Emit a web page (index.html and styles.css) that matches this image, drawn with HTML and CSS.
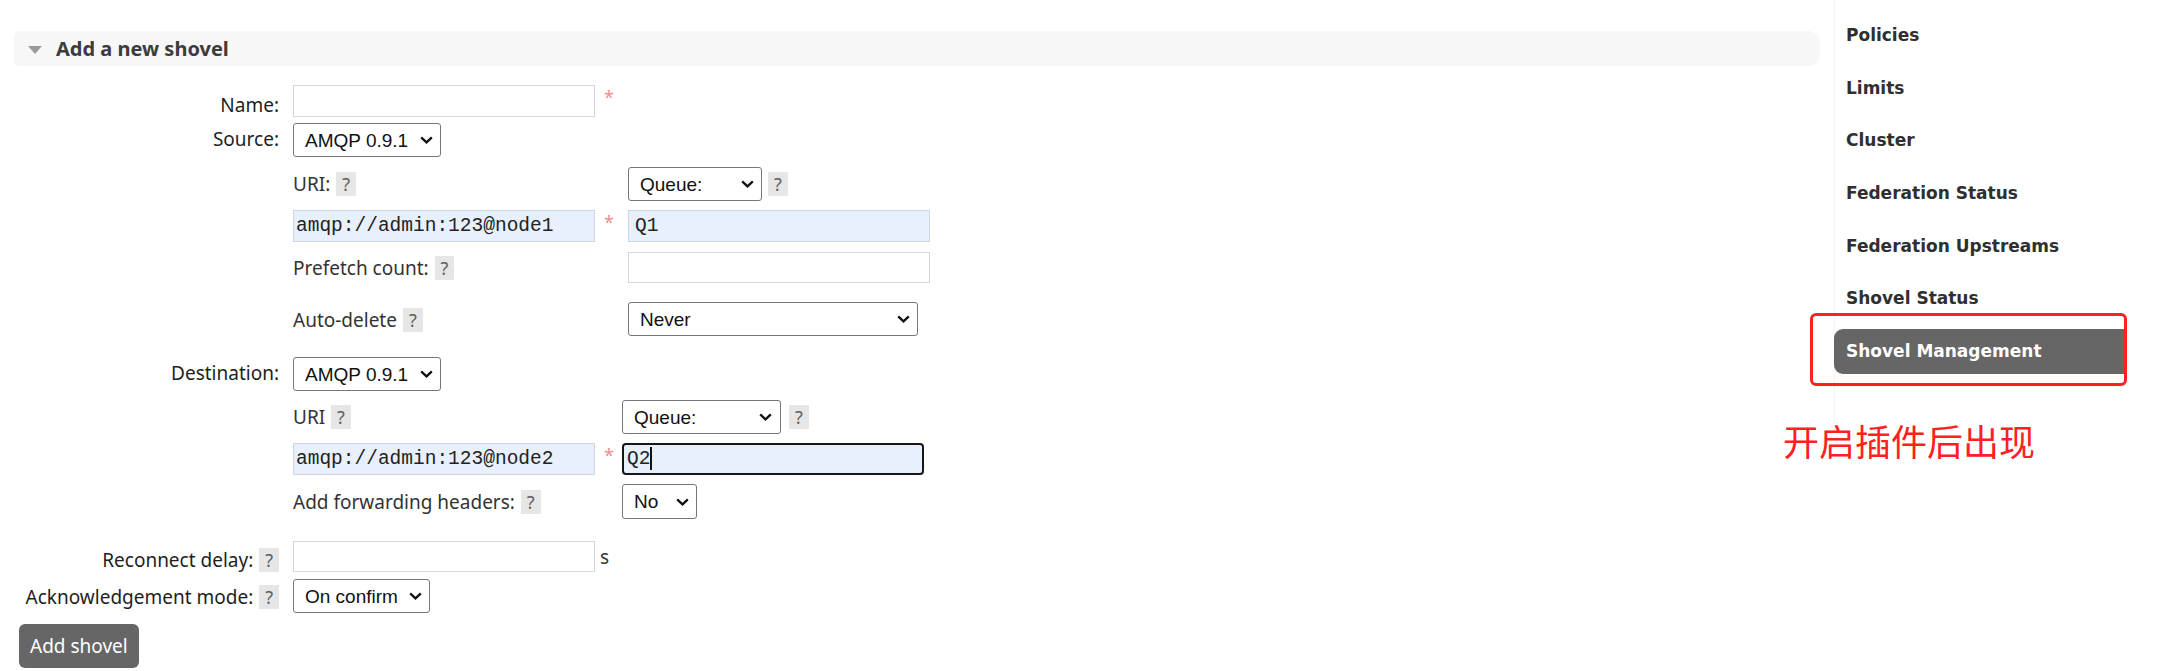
FILE: index.html
```html
<!DOCTYPE html>
<html lang="en">
<head>
<meta charset="utf-8">
<title>Add a new shovel</title>
<link rel="stylesheet" href="styles.css">
</head>
<body>
<div class="page">
  <main class="main">
    <div class="section-head">
      <span class="tri"></span>
      <h2 class="section-title">Add a new shovel</h2>
    </div>

    <form class="form">
      <div class="row r-name">
        <label class="lbl pad-8">Name:</label>
        <div class="field">
          <input class="txt" type="text">
          <span class="req">*</span>
        </div>
      </div>

      <div class="row r-source">
        <label class="lbl pad-4">Source:</label>
        <div class="field">
          <select class="sel sel-proto"><option>AMQP 0.9.1</option></select>
        </div>
      </div>

      <div class="row r-srcsub">
        <div></div>
        <div class="sub">
          <div class="subrow sub-src">
            <div class="sublbl pad-5">URI: <span class="help">?</span></div>
            <div></div>
            <div class="cell-inline">
              <select class="sel sel-queue-src"><option>Queue:</option></select>
              <span class="help">?</span>
            </div>
          </div>
          <div class="subrow sub-src sr-2">
            <input class="txt mono auto" type="text" value="amqp://admin:123@node1">
            <span class="req req-sub">*</span>
            <input class="txt mono auto q1" type="text" value="Q1">
          </div>
          <div class="subrow sub-src sr-3">
            <div class="sublbl pad-4">Prefetch count: <span class="help">?</span></div>
            <div></div>
            <input class="txt h31" type="text">
          </div>
          <div class="subrow sub-src sr-4">
            <div class="sublbl pad-6">Auto-delete <span class="help">?</span></div>
            <div></div>
            <select class="sel sel-never"><option>Never</option></select>
          </div>
        </div>
      </div>

      <div class="row r-dest">
        <label class="lbl pad-4">Destination:</label>
        <div class="field">
          <select class="sel sel-proto"><option>AMQP 0.9.1</option></select>
        </div>
      </div>

      <div class="row r-destsub">
        <div></div>
        <div class="sub">
          <div class="subrow sub-dst">
            <div class="sublbl pad-5">URI <span class="help">?</span></div>
            <div></div>
            <div class="cell-inline">
              <select class="sel sel-queue-dst"><option>Queue:</option></select>
              <span class="help help-gap">?</span>
            </div>
          </div>
          <div class="subrow sub-dst sr-d2">
            <input class="txt mono auto" type="text" value="amqp://admin:123@node2">
            <span class="req req-sub">*</span>
            <div class="focus-box">
              <input class="txt mono auto focused" type="text" value="Q2">
              <span class="caret"></span>
            </div>
          </div>
          <div class="subrow sub-dst sr-d3">
            <div class="sublbl pad-6">Add forwarding headers: <span class="help">?</span></div>
            <div></div>
            <select class="sel sel-no"><option>No</option></select>
          </div>
        </div>
      </div>

      <div class="row r-reconnect">
        <label class="lbl pad-7">Reconnect delay: <span class="help">?</span></label>
        <div class="field">
          <input class="txt h31" type="text">
          <span class="unit">s</span>
        </div>
      </div>

      <div class="row r-ack">
        <label class="lbl pad-6">Acknowledgement mode: <span class="help">?</span></label>
        <div class="field">
          <select class="sel sel-ack"><option>On confirm</option></select>
        </div>
      </div>

      <button class="btn" type="button">Add shovel</button>
    </form>
  </main>

  <aside class="side">
    <nav class="nav">
      <a class="nav-item">Policies</a>
      <a class="nav-item">Limits</a>
      <a class="nav-item">Cluster</a>
      <a class="nav-item">Federation Status</a>
      <a class="nav-item">Federation Upstreams</a>
      <a class="nav-item">Shovel Status</a>
      <a class="nav-item active">Shovel Management</a>
    </nav>
  </aside>

  <div class="annot-box"></div>
  <div class="annot-text">开启插件后出现</div>
</div>
</body>
</html>
```

FILE: styles.css
```css
html, body {
  margin: 0;
  padding: 0;
  background: #fff;
}

body {
  font-family: "Noto Sans", "DejaVu Sans", sans-serif;
  font-size: 19px;
  color: #222;
}

.page {
  position: relative;
  display: flex;
  align-items: flex-start;
  width: 2168px;
  height: 671px;
  overflow: hidden;
}

/* ---------- main column ---------- */
.main {
  width: 1806px;
  padding-left: 14px;
  padding-top: 31px;
  flex: none;
}

.section-head {
  display: flex;
  align-items: center;
  height: 35px;
  background: #f7f7f7;
  border-radius: 6px 12px 12px 6px;
}

.tri {
  width: 0;
  height: 0;
  margin-left: 14px;
  margin-top: 2px;
  border-left: 7.5px solid transparent;
  border-right: 7.5px solid transparent;
  border-top: 8px solid #9a9a9a;
}

.section-title {
  margin: 0 0 0 14px;
  font-family: "Noto Sans", sans-serif;
  font-weight: 700;
  font-size: 20px;
  line-height: 24px;
  color: #3c3c3c;
}

/* ---------- form ---------- */
.form {
  margin: 0;
}

.row {
  display: grid;
  grid-template-columns: 265px 1fr;
  column-gap: 14px;
  align-items: start;
}

.lbl {
  text-align: right;
  line-height: 24px;
  white-space: nowrap;
  color: #1e1e1e;
}

.pad-4 { padding-top: 4px; }
.pad-5 { padding-top: 5px; }
.pad-6 { padding-top: 6px; }
.pad-7 { padding-top: 7px; }
.pad-8 { padding-top: 8px; }

.field {
  display: flex;
  align-items: center;
}

.r-name { margin-top: 19px; }
.r-source { margin-top: 6px; }
.r-srcsub { margin-top: 10px; }
.r-dest { margin-top: 21px; }
.r-destsub { margin-top: 9px; }
.r-reconnect { margin-top: 22px; }
.r-ack { margin-top: 7px; }

.sub {
  display: flex;
  flex-direction: column;
}

.subrow {
  display: grid;
  align-items: start;
}

.sub-src { grid-template-columns: 302px 33px auto; }
.sub-dst { grid-template-columns: 302px 27px auto; }

.sr-2 { margin-top: 9px; }
.sr-3 { margin-top: 10px; }
.sr-4 { margin-top: 19px; }
.sr-d2 { margin-top: 9px; }
.sr-d3 { margin-top: 9px; }

.sublbl {
  line-height: 24px;
  white-space: nowrap;
  color: #333;
}

.cell-inline {
  display: flex;
  align-items: center;
}

.help {
  display: inline-block;
  line-height: 24px;
  height: 24px;
  padding: 0 6px;
  margin-left: 1px;
  background: #e6e6e6;
  color: #606060;
  font-size: 18px;
}

.cell-inline .help { margin-left: 6px; }
.cell-inline .help-gap { margin-left: 8px; }

/* text inputs */
.txt {
  box-sizing: border-box;
  width: 302px;
  height: 32px;
  margin: 0;
  padding: 1px 2px;
  border: 1px solid #d6d6d6;
  border-radius: 0;
  background: #fff;
  font-family: "Liberation Mono", monospace;
  font-size: 19.5px;
  color: #222;
  outline: none;
}

.h31 { height: 31px; }

.mono { font-family: "Liberation Mono", monospace; }

.auto {
  background: #e8f0fe;
  border-color: #cdd6e3;
}

.q1 { padding-left: 6px; }

.focus-box {
  position: relative;
  width: 302px;
  height: 32px;
}

.focused {
  border: 2px solid #161616;
  border-radius: 4px;
  padding-left: 3px;
}

.caret {
  position: absolute;
  left: 28px;
  top: 4px;
  width: 2px;
  height: 23px;
  background: #111;
}

.req {
  color: #ec9090;
  font-size: 18px;
  line-height: 24px;
  align-self: flex-start;
  margin-left: 9px;
  margin-top: 0;
}

.req-sub {
  margin-left: 9px;
}

.unit {
  margin-left: 5px;
  color: #333;
  line-height: 24px;
}

/* selects */
.sel {
  box-sizing: border-box;
  height: 34px;
  margin: 0;
  padding: 0 26px 0 11px;
  border: 1px solid #767676;
  border-radius: 3px;
  background-color: #fff;
  background-image: url("data:image/svg+xml,%3Csvg xmlns='http://www.w3.org/2000/svg' width='13' height='8' viewBox='0 0 13 8'%3E%3Cpath d='M1.2 1.3 6.5 6.4 11.8 1.3' fill='none' stroke='%23111' stroke-width='2.3'/%3E%3C/svg%3E");
  background-repeat: no-repeat;
  background-position: right 7px center;
  background-size: 13px 8px;
  -webkit-appearance: none;
  appearance: none;
  font-family: "Liberation Sans", Arial, sans-serif;
  font-size: 19px;
  color: #111;
  outline: none;
}

.sel-proto { width: 148px; }
.sel-queue-src { width: 134px; }
.sel-queue-dst { width: 159px; background-position: right 8px center; }
.sel-never { width: 290px; }
.sel-no { width: 75px; height: 35px; }
.sel-ack { width: 137px; }

/* button */
.btn {
  display: block;
  margin: 11px 0 0 5px;
  height: 44px;
  padding: 0 11px;
  border: none;
  border-radius: 6px;
  background: #666;
  color: #fff;
  font-family: "Noto Sans", sans-serif;
  font-size: 19px;
  line-height: 24px;
}

/* ---------- side nav ---------- */
.side {
  flex: none;
  width: 290px;
  margin-left: 14px;
  padding-top: 13px;
  border-left: 1px solid #f4f4f4;
  min-height: 420px;
  margin-top: 0;
}

.nav {
  display: flex;
  flex-direction: column;
  gap: 7.7px;
}

.nav-item {
  display: block;
  height: 45px;
  line-height: 45px;
  padding-left: 11px;
  font-family: "DejaVu Sans", Verdana, sans-serif;
  font-weight: 700;
  font-size: 17px;
  color: #2f2f2f;
  white-space: nowrap;
}

.nav-item.active {
  background: #666;
  color: #fff;
  border-radius: 9px 0 0 9px;
  margin-left: -1px;
  padding-left: 12px;
}

/* ---------- annotations ---------- */
.annot-box {
  position: absolute;
  left: 1810px;
  top: 313px;
  width: 317px;
  height: 73px;
  box-sizing: border-box;
  border: 3px solid #ff2121;
  border-radius: 6px;
}

.annot-text {
  position: absolute;
  left: 1783px;
  top: 422px;
  font-family: "Noto Sans CJK SC", "Noto Sans", sans-serif;
  font-size: 36px;
  line-height: 36px;
  color: #ff2121;
  white-space: nowrap;
}
```
